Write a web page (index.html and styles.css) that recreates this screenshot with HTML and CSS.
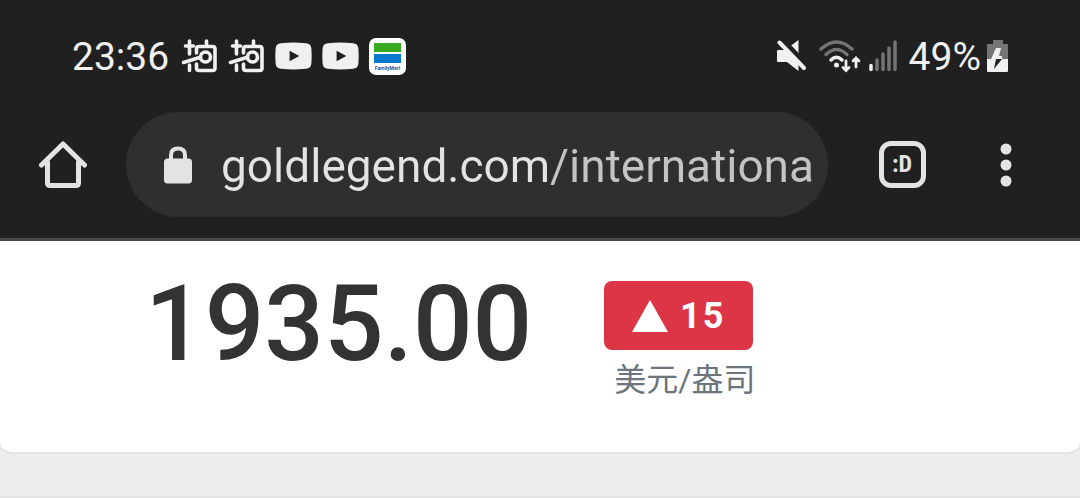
FILE: index.html
```html
<!DOCTYPE html>
<html lang="zh">
<head>
<meta charset="utf-8">
<meta name="viewport" content="width=device-width, initial-scale=1">
<title>goldlegend.com</title>
<link rel="stylesheet" href="styles.css">
</head>
<body>
<svg class="defs" aria-hidden="true">
  <symbol id="pai" viewBox="0 0 36 36">
    <g fill="none" stroke="currentColor" stroke-width="3.600" stroke-linecap="round" stroke-linejoin="round">
      <path d="M4 8H12M8 3V16M8 27V32.500M2 24.500L18 19.500"/>
      <path d="M15 15V11Q15 8.500 17.500 8.500H31Q33.500 8.500 33.500 11V30Q33.500 32.500 31 32.500H17.500Q15 32.500 15 30V26M25 3V8"/>
      <circle cx="24" cy="19" r="5"/>
    </g>
  </symbol>
  <symbol id="tube" viewBox="0 0 38 28">
    <path fill="currentColor" fill-rule="evenodd" d="M6 1Q19 -.5 32 1Q37 1.500 37.300 6Q38 14 37.300 22Q37 26.500 32 27Q19 28.500 6 27Q1 26.500 .7 22Q0 14 .7 6Q1 1.500 6 1ZM15 8.500V19.500L25 14Z"/>
  </symbol>
</svg>
<header class="chrome">
  <div class="status">
    <div class="status-group">
      <span class="clock">23:36</span>
      <svg class="icon-pai" role="img" aria-label="notification"><use href="#pai"/></svg>
      <svg class="icon-pai" role="img" aria-label="notification"><use href="#pai"/></svg>
      <svg class="icon-tube" role="img" aria-label="video"><use href="#tube"/></svg>
      <svg class="icon-tube" role="img" aria-label="video"><use href="#tube"/></svg>
      <svg class="icon-mart" viewBox="0 0 37 37" role="img" aria-label="FamilyMart">
        <rect width="37" height="37" rx="7" fill="#fff"/>
        <rect x="5" y="5" width="27" height="9" fill="#36ab22"/>
        <rect x="5" y="16" width="27" height="9" fill="#0878c8"/>
        <text x="18.500" y="32" text-anchor="middle" class="mart-text">FamilyMart</text>
      </svg>
    </div>
    <div class="status-group status-right">
      <svg class="icon-mute" viewBox="0 0 30 34" role="img" aria-label="muted">
        <path fill="currentColor" d="M1 11H8L21.500 1V32L10 23H1Q0 23 0 22V12Q0 11 1 11Z"/>
        <path d="M2 -2L30 27" stroke="#202020" stroke-width="6"/>
        <path d="M2.500 3.500L27 29" stroke="currentColor" stroke-width="4" stroke-linecap="round"/>
      </svg>
      <svg class="icon-wifi" viewBox="0 0 42 34" role="img" aria-label="wifi">
        <g fill="none" stroke-width="3.500" stroke-linecap="round">
          <path d="M2 10Q17.500 -4 33 10" stroke="#747474"/>
          <path d="M7 15.500Q17.500 5.500 28 15.500" stroke="#747474"/>
          <path d="M12 21Q17.500 15.500 23 21" stroke="currentColor"/>
          <path d="M27 22V31M24 28.500L27 31.500L30 28.500M37 28V19M34 22L37 19L40 22" stroke="currentColor" stroke-width="2.800"/>
        </g>
        <circle cx="17.500" cy="26" r="2.500" fill="currentColor"/>
      </svg>
      <svg class="icon-signal" viewBox="0 0 28 32" role="img" aria-label="signal">
        <g stroke-width="3.500" stroke-linecap="round" stroke="#747474">
          <path d="M2 25.500V29.500" stroke="currentColor"/>
          <path d="M8 20V29.500M14 14V29.500M20 8V29.500M26 2V29.500"/>
        </g>
      </svg>
      <span class="percent">49%</span>
      <svg class="icon-battery" viewBox="0 0 22 34" role="img" aria-label="charging">
        <path fill="#747474" d="M6 1H16V5H20Q21 5 21 6V20H0V6Q0 5 1 5H6Z"/>
        <path fill="currentColor" d="M0 20H21V32Q21 33 20 33H1Q0 33 0 32Z"/>
        <path fill="currentColor" d="M9 9H14L12 17H15V20H4Z"/>
        <path fill="#202020" d="M7 30L9 20H15Z"/>
      </svg>
    </div>
  </div>
  <div class="toolbar">
    <button class="tool" type="button" aria-label="Home">
      <svg class="icon-home" viewBox="0 0 48 48">
        <path d="M2.500 24L24 3L45.500 24M8.500 21V42Q8.500 44.500 11 44.500H37Q39.500 44.500 39.500 42V21" fill="none" stroke="currentColor" stroke-width="5" stroke-linecap="round" stroke-linejoin="round"/>
      </svg>
    </button>
    <div class="omnibox">
      <svg class="icon-lock" viewBox="0 0 30 38" aria-hidden="true">
        <path d="M8 14V9Q8 2.500 15 2.500T22 9V14" fill="none" stroke="currentColor" stroke-width="4"/>
        <rect x="1" y="12.500" width="28" height="25" rx="3.500" fill="currentColor"/>
      </svg>
      <input class="url" type="text" aria-label="Address" value="goldlegend.com/internationa">
    </div>
    <button class="tool tabs" type="button" aria-label="Tabs"><span class="tab-count">:D</span></button>
    <button class="tool" type="button" aria-label="Menu">
      <svg class="icon-menu" viewBox="0 0 12 44"><g fill="currentColor"><circle cx="6" cy="6" r="5.500"/><circle cx="6" cy="22" r="5.500"/><circle cx="6" cy="38" r="5.500"/></g></svg>
    </button>
  </div>
</header>
<main class="page">
  <section class="card quote">
    <h1 class="price">1935.00</h1>
    <div class="side">
      <div class="badge">
        <svg class="icon-up" viewBox="0 0 36 32" aria-hidden="true"><path d="M18 0L36 32H0Z" fill="currentColor"/></svg>
        <span>15</span>
      </div>
      <p class="unit">美元/盎司</p>
    </div>
  </section>
  <section class="card next"></section>
</main>
</body>
</html>
```
FILE: styles.css
```css
* { box-sizing: border-box; }

body {
  margin: 0;
  background: #ededed;
  font-family: Roboto, "Noto Sans CJK SC", sans-serif;
}

.defs { position: absolute; width: 0; height: 0; }

svg { display: block; flex: none; }

.chrome {
  background: #202020;
  color: #f0f0f0;
  border-bottom: 3px solid #484848;
  padding-bottom: 21px;
}

.status {
  display: flex;
  justify-content: space-between;
  height: 112px;
  padding: 0 71px 0 72px;
}

.status-group { display: flex; align-items: center; gap: 10px; }
.status-right { gap: 8px; }

.clock, .percent { padding-top: 2px; font-size: 39px; line-height: 48px; }
.clock { margin-right: 2px; }
.percent { margin-right: -2px; }
.icon-pai { width: 37px; height: 36px; }
.icon-tube { width: 37px; height: 28px; }
.icon-mart { width: 37px; height: 37px; }
.mart-text { font: 700 5px Roboto, sans-serif; fill: #1b5a9c; }
.icon-mute { width: 30px; height: 34px; margin-right: 4px; }
.icon-wifi { width: 42px; height: 34px; }
.icon-signal { width: 28px; height: 32px; margin-right: 4px; }
.icon-battery { width: 22px; height: 34px; }

.toolbar {
  display: flex;
  align-items: center;
  color: #e3e3e3;
  padding: 0 22px 0 0;
}

.tool {
  display: flex;
  align-items: center;
  justify-content: center;
  width: 104px;
  height: 104px;
  padding: 0;
  border: 0;
  background: none;
  color: inherit;
  font: inherit;
}

.toolbar > .tool:first-child { width: 126px; }
.icon-home { width: 48px; height: 48px; }
.icon-menu { width: 12px; height: 44px; }

.omnibox {
  display: flex;
  align-items: center;
  flex: 1;
  gap: 28px;
  min-width: 0;
  height: 105px;
  margin-right: 22px;
  padding: 0 16px 0 37px;
  border-radius: 53px;
  background: #2e2f31;
}

.icon-lock { width: 30px; height: 38px; }

.url {
  flex: 1;
  min-width: 0;
  padding: 2px 0 0;
  border: 0;
  outline: 0;
  font: 400 46px/64px Roboto, sans-serif;
  color: transparent;
  background: linear-gradient(90deg, #e3e3e3 326px, #c4c4c4 328px);
  -webkit-background-clip: text;
  background-clip: text;
}

.tab-count {
  width: 47px;
  height: 47px;
  border: 5px solid;
  border-radius: 12px;
  font: 700 24px/36px "Roboto Condensed", Roboto, sans-serif;
}

.card { background: #fff; border-bottom: 2px solid #e3e3e3; }

.quote {
  display: flex;
  align-items: flex-start;
  gap: 72px;
  height: 213px;
  padding: 40px 145px 0;
  border-radius: 0 0 12px 12px;
}

.price {
  margin: 0;
  font-size: 105px;
  font-weight: 500;
  line-height: 88px;
  color: #333;
}

.badge {
  display: flex;
  align-items: center;
  justify-content: center;
  gap: 12px;
  width: 149px;
  height: 69px;
  border-radius: 8px;
  background: #dc3545;
  color: #fff;
  font-size: 36px;
  font-weight: 700;
  letter-spacing: 2px;
}

.icon-up { width: 36px; height: 32px; }

.unit {
  margin: 8px 0 0 10px;
  font-size: 32px;
  line-height: 44px;
  color: #6c757d;
}

.next {
  height: 2px;
  margin-top: 42px;
  border: 0;
  border-top: 2px solid #e3e3e3;
  border-radius: 12px 12px 0 0;
}
```
